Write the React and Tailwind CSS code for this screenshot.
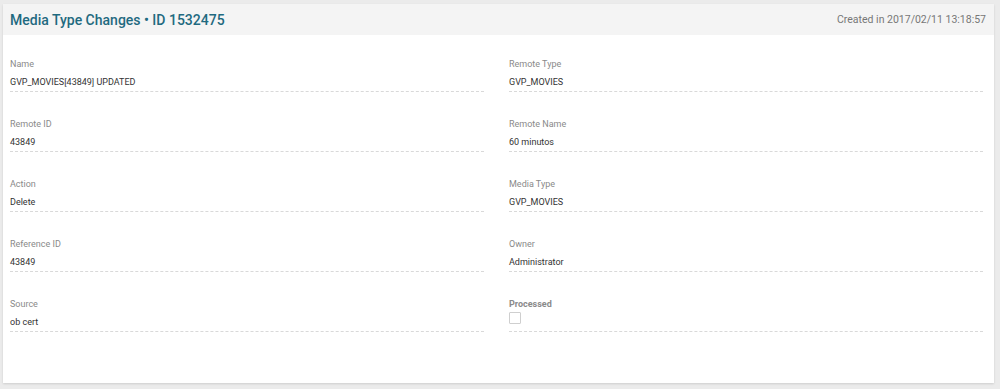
import React from "react";

const fields = [
  { label: "Name", value: "GVP_MOVIES[43849] UPDATED" },
  { label: "Remote Type", value: "GVP_MOVIES" },
  { label: "Remote ID", value: "43849" },
  { label: "Remote Name", value: "60 minutos" },
  { label: "Action", value: "Delete" },
  { label: "Media Type", value: "GVP_MOVIES" },
  { label: "Reference ID", value: "43849" },
  { label: "Owner", value: "Administrator" },
  { label: "Source", value: "ob cert" },
  { label: "Processed", checkbox: true },
];

function Field({ label, value, checkbox }) {
  return (
    <div className="h-[60px] pt-[23px]">
      <div className="border-b border-dashed border-[#d9d9d9] h-[34px]">
        <div
          className={
            checkbox
              ? "text-[9px] leading-[12px] font-bold text-[#8a8a8a]"
              : "text-[9px] leading-[12px] text-[#8a8a8a]"
          }
        >
          {label}
        </div>
        {checkbox ? (
          <div className="mt-[2px] w-[12px] h-[12px] border border-[#cfcfcf] rounded-[1px] bg-white" />
        ) : (
          <div className="mt-[6px] text-[9px] leading-[12px] text-[#333]">{value}</div>
        )}
      </div>
    </div>
  );
}

export default function App() {
  return (
    <div
      className="w-[1000px] h-[389px] bg-[#ebebeb] pt-[4px] pl-[3px]"
      style={{ fontFamily: "Roboto, 'Liberation Sans', sans-serif" }}
    >
      <div className="w-[991px] h-[379px] bg-white shadow-[0_1px_2px_rgba(0,0,0,0.12)]">
        {/* Header */}
        <div className="h-[31px] bg-[#f4f4f4] flex items-center justify-between pl-[7px] pr-[8px]">
          <h2 className="text-[14px] font-medium text-[#1f6a80] mt-[2px]">
            Media Type Changes • ID 1532475
          </h2>
          <span className="text-[10.5px] text-[#777]">Created in 2017/02/11 13:18:57</span>
        </div>

        {/* Fields */}
        <div className="grid grid-cols-2 gap-x-[25px] pl-[7px] pr-[11px]">
          {fields.map((f) => (
            <Field key={f.label} {...f} />
          ))}
        </div>
      </div>
    </div>
  );
}
